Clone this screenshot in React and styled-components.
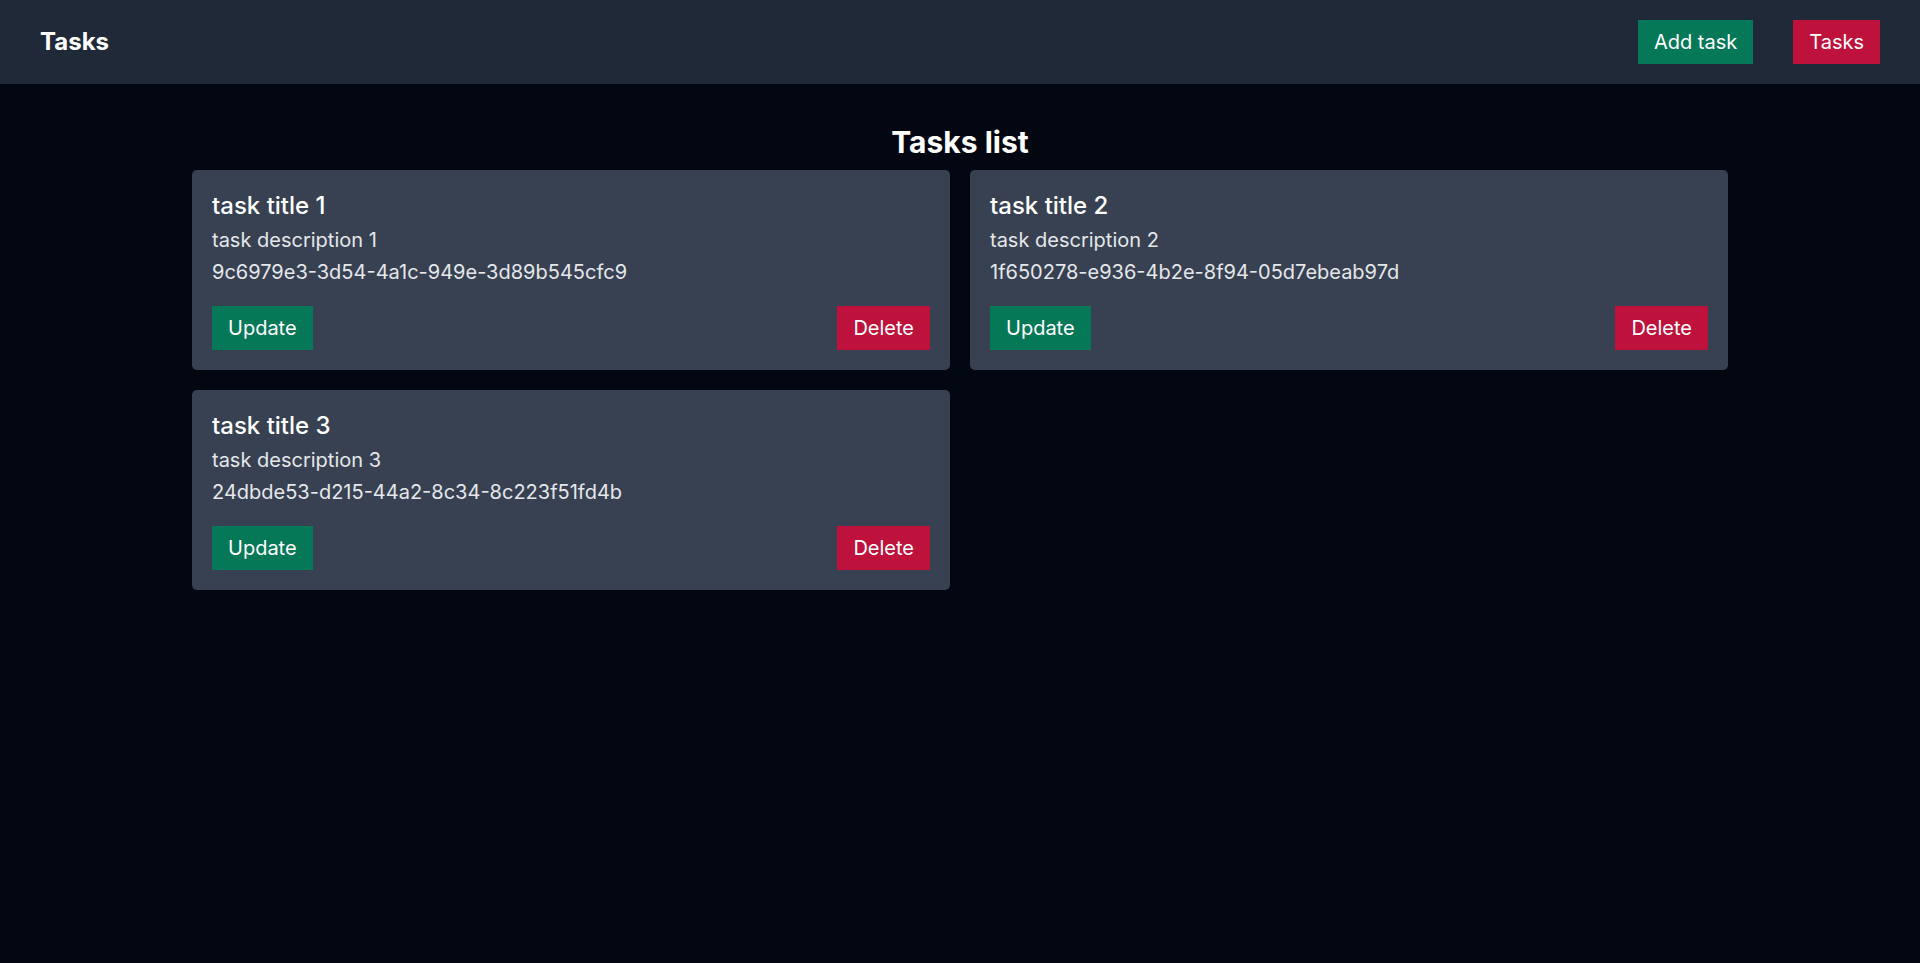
import React from "react";
import styled, { createGlobalStyle } from "styled-components";

const GlobalStyle = createGlobalStyle`
  * {
    box-sizing: border-box;
  }

  html,
  body {
    margin: 0;
    padding: 0;
    min-height: 100%;
    background: #030712;
    font-family: Inter, "Noto Sans", sans-serif;
    color: #fff;
  }
`;

const Page = styled.div`
  min-height: 100vh;
  background: #030712;
`;

const Nav = styled.nav`
  display: flex;
  align-items: center;
  justify-content: space-between;
  height: 84px;
  padding: 20px 40px;
  background: #1f2937;
`;

const Brand = styled.h1`
  margin: 0;
  font-size: 24px;
  line-height: 32px;
  font-weight: 700;
  color: #fff;
`;

const NavLinks = styled.div`
  display: flex;
  align-items: center;
  gap: 40px;
`;

const Button = styled.button`
  border: none;
  border-radius: 0;
  padding: 8px 16px;
  height: 44px;
  font-family: inherit;
  font-size: 20px;
  line-height: 28px;
  font-weight: 400;
  color: #fff;
  cursor: pointer;
  background: ${(p) => (p.$variant === "danger" ? "#be123c" : "#047857")};
`;

const Main = styled.main`
  max-width: 1536px;
  margin: 0 auto;
  padding-top: 40px;
`;

const Heading = styled.h2`
  margin: 0 0 10px;
  text-align: center;
  font-size: 30px;
  line-height: 36px;
  font-weight: 700;
`;

const Grid = styled.div`
  display: grid;
  grid-template-columns: repeat(2, 1fr);
  gap: 20px;
`;

const Card = styled.div`
  display: flex;
  flex-direction: column;
  padding: 20px;
  background: #374151;
  border-radius: 5px;
`;

const Title = styled.h3`
  margin: 0 0 4px;
  font-size: 24px;
  line-height: 32px;
  font-weight: 500;
  color: #fff;
`;

const Text = styled.p`
  margin: 0 0 4px;
  font-size: 20px;
  line-height: 28px;
  color: #e5e7eb;
`;

const Actions = styled.div`
  display: flex;
  justify-content: space-between;
  margin-top: 16px;
`;

const tasks = [
  {
    id: "9c6979e3-3d54-4a1c-949e-3d89b545cfc9",
    title: "task title 1",
    description: "task description 1",
  },
  {
    id: "1f650278-e936-4b2e-8f94-05d7ebeab97d",
    title: "task title 2",
    description: "task description 2",
  },
  {
    id: "24dbde53-d215-44a2-8c34-8c223f51fd4b",
    title: "task title 3",
    description: "task description 3",
  },
];

function TaskCard({ task }) {
  return (
    <Card>
      <Title>{task.title}</Title>
      <Text>{task.description}</Text>
      <Text>{task.id}</Text>
      <Actions>
        <Button>Update</Button>
        <Button $variant="danger">Delete</Button>
      </Actions>
    </Card>
  );
}

export default function App() {
  return (
    <Page>
      <GlobalStyle />
      <Nav>
        <Brand>Tasks</Brand>
        <NavLinks>
          <Button>Add task</Button>
          <Button $variant="danger">Tasks</Button>
        </NavLinks>
      </Nav>
      <Main>
        <Heading>Tasks list</Heading>
        <Grid>
          {tasks.map((task) => (
            <TaskCard key={task.id} task={task} />
          ))}
        </Grid>
      </Main>
    </Page>
  );
}
